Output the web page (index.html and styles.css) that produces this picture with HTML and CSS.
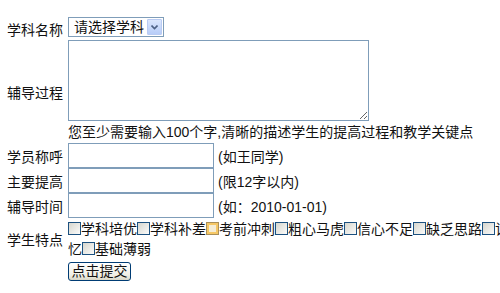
FILE: index.html
```html
<!DOCTYPE html>
<html lang="zh-CN">
<head>
    <meta charset="UTF-8">
    <title>辅导记录</title>
    <link rel="stylesheet" href="styles.css">
</head>
<body>
    <form class="record">
        <table class="form-table">
            <tr class="row-subject">
                <td class="label">学科名称</td>
                <td class="field">
                    <div class="select-wrap">
                        <select class="subject">
                            <option>请选择学科</option>
                        </select>
                        <span class="select-btn">
                            <svg width="7" height="5" viewBox="0 0 7 5"><path d="M0.5 0.5 L3.5 3.5 L6.5 0.5" fill="none" stroke="#4d6185" stroke-width="1.6"/></svg>
                        </span>
                    </div>
                </td>
            </tr>
            <tr>
                <td class="label">辅导过程</td>
                <td class="field">
                    <textarea class="process"></textarea>
                    <div class="help">您至少需要输入100个字,清晰的描述学生的提高过程和教学关键点</div>
                </td>
            </tr>
            <tr class="row-input">
                <td class="label">学员称呼</td>
                <td class="field">
                    <div class="line"><input type="text" class="text"><span class="hint">(如王同学)</span></div>
                </td>
            </tr>
            <tr class="row-input">
                <td class="label">主要提高</td>
                <td class="field">
                    <div class="line"><input type="text" class="text"><span class="hint">(限12字以内)</span></div>
                </td>
            </tr>
            <tr class="row-input">
                <td class="label">辅导时间</td>
                <td class="field">
                    <div class="line"><input type="text" class="text"><span class="hint">(如：2010-01-01)</span></div>
                </td>
            </tr>
            <tr>
                <td class="label">学生特点</td>
                <td class="field">
                    <div class="traits">
                        <label><input type="checkbox" class="check">学科培优</label><label><input type="checkbox" class="check">学科补差</label><label><input type="checkbox" class="check hot">考前冲刺</label><label><input type="checkbox" class="check">粗心马虎</label><label><input type="checkbox" class="check">信心不足</label><label><input type="checkbox" class="check">缺乏思路</label><label><input type="checkbox" class="check">记忆</label><label><input type="checkbox" class="check">基础薄弱</label>
                    </div>
                </td>
            </tr>
            <tr>
                <td class="label"></td>
                <td class="field">
                    <button type="button" class="submit">点击提交</button>
                </td>
            </tr>
        </table>
    </form>
</body>
</html>
```

FILE: styles.css
```css
html, body {
    overflow: hidden;
}
body {
    margin: 0;
    font-family: 'Liberation Sans', 'Noto Sans CJK SC', sans-serif;
    font-size: 14px;
    color: #111;
    background: #fff;
}
.form-table {
    border-collapse: collapse;
    margin-top: 17px;
    width: 513px;
}
.form-table td {
    padding: 0;
}
.label {
    width: 56px;
    padding: 0 5px 0 7px !important;
    vertical-align: middle;
    white-space: nowrap;
}
.field {
    width: 445px;
    vertical-align: top;
}
.select-wrap {
    position: relative;
    width: 96px;
    height: 20px;
    margin-bottom: 3px;
}
.subject {
    -webkit-appearance: none;
    appearance: none;
    width: 96px;
    height: 20px;
    border: 1px solid #7f9db9;
    background: #fff;
    font: inherit;
    color: #111;
    padding: 0 0 0 5px;
    line-height: 18px;
    border-radius: 0;
    outline: none;
}
.select-btn {
    position: absolute;
    right: 2px;
    top: 2px;
    width: 15px;
    height: 16px;
    box-sizing: border-box;
    border: 1px solid #b9cbf3;
    border-radius: 1px;
    background: linear-gradient(to bottom, #dbe6fd, #b8cdf8);
    display: flex;
    align-items: center;
    justify-content: center;
}
.process {
    display: block;
    width: 301px;
    height: 81px;
    box-sizing: border-box;
    border: 1px solid #7f9db9;
    margin: 0;
    padding: 2px;
    font: inherit;
}
.help {
    line-height: 22px;
    height: 22px;
    white-space: nowrap;
}
.line {
    display: flex;
    align-items: center;
    height: 25px;
}
.text {
    width: 146px;
    height: 25px;
    box-sizing: border-box;
    border: 1px solid #7f9db9;
    margin: 0 4px 0 0;
    padding: 1px 3px;
    font: inherit;
}
.hint {
    white-space: nowrap;
}
.traits {
    width: 445px;
    line-height: 20px;
    padding-top: 1px;
}
.check {
    -webkit-appearance: none;
    appearance: none;
    width: 13px;
    height: 13px;
    box-sizing: border-box;
    margin: 0;
    border: 1px solid #1c5180;
    background: linear-gradient(135deg, #d6d6ce, #fbfbfa);
    vertical-align: -1px;
}
.check.hot {
    border-color: #a98f5a;
    box-shadow: inset 0 0 0 2px #f6c866;
    background: #f5edd6;
}
.submit {
    margin-top: 3px;
    width: 63px;
    height: 19px;
    padding: 0;
    border: 1px solid #003c74;
    border-radius: 3px;
    background: linear-gradient(to bottom, #ffffff, #f0efe6 70%, #d8d6c6);
    font: inherit;
    line-height: 17px;
    color: #111;
}
```
